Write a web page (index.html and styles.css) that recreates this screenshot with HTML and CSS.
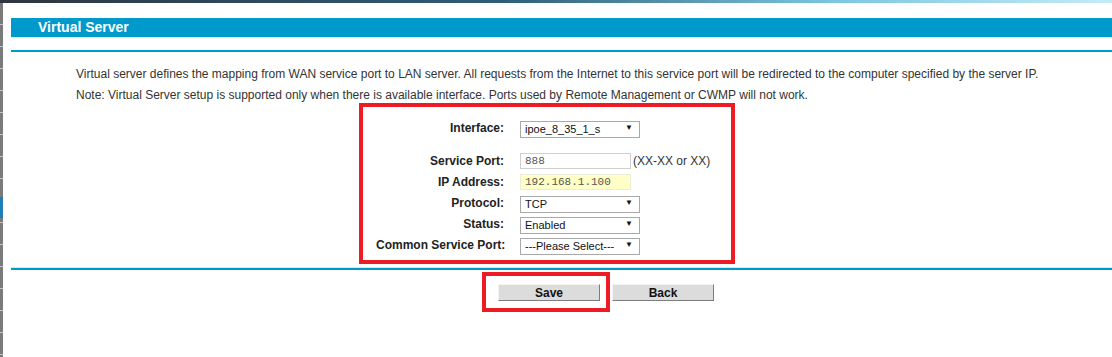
FILE: index.html
```html
<!DOCTYPE html>
<html lang="en">
<head>
    <meta charset="UTF-8">
    <title>Virtual Server</title>
    <link rel="stylesheet" href="styles.css">
</head>
<body>
    <div class="topline"></div>
    <div class="page">
        <div class="side"></div>
        <div class="main">
            <div class="title-bar">Virtual Server</div>
            <div class="rule"></div>

            <div class="intro">
                <p>Virtual server defines the mapping from WAN service port to LAN server. All requests from the Internet to this service port will be redirected to the computer specified by the server IP.</p>
                <p>Note: Virtual Server setup is supported only when there is available interface. Ports used by Remote Management or CWMP will not work.</p>
            </div>

            <div class="mark form-box">
                <div class="form">
                    <label>Interface:</label>
                    <span class="select"><select><option>ipoe_8_35_1_s</option></select></span>

                    <div class="spacer"></div>

                    <label>Service Port:</label>
                    <span><input type="text" class="text" value="888"><span class="hint">(XX-XX or XX)</span></span>

                    <label>IP Address:</label>
                    <span><input type="text" class="text ip" value="192.168.1.100"></span>

                    <label>Protocol:</label>
                    <span class="select"><select><option>TCP</option></select></span>

                    <label>Status:</label>
                    <span class="select"><select><option>Enabled</option></select></span>

                    <label>Common Service Port:</label>
                    <span class="select"><select><option>---Please Select---</option></select></span>
                </div>
            </div>

            <div class="rule rule-bottom"></div>

            <div class="buttons">
                <span class="mark save-mark"><button>Save</button></span>
                <button class="back">Back</button>
            </div>
        </div>
    </div>
</body>
</html>
```

FILE: styles.css
```css
body {
    margin: 0;
    font-family: 'Liberation Sans', Arial, sans-serif;
    background: #fff;
    color: #333;
}
.topline {
    height: 3px;
    background: linear-gradient(to right, #2f3540, #2e5d78 45%, #7cc6e0 75%, #c4ecf6);
}
.page {
    display: flex;
    height: 354px;
}
.side {
    width: 3px;
    flex: none;
    background:
        linear-gradient(#1f7fb2, #1f7fb2) 0 194px / 3px 21px no-repeat,
        repeating-linear-gradient(#7a7a7a 0 21px, #c4c4c4 21px 22px);
}
.main {
    flex: 1;
    padding-left: 8px;
}
.title-bar {
    margin-top: 15px;
    height: 19px;
    line-height: 19px;
    padding-left: 27px;
    background: #0099cc;
    border-bottom: 1px solid #dcebf2;
    color: #fff;
    font-size: 14px;
    font-weight: bold;
}
.rule {
    margin-top: 12px;
    height: 2px;
    background: #0099cc;
}
.intro {
    margin-top: 12px;
    padding-left: 65px;
    font-size: 12px;
    line-height: 21px;
}
.intro p {
    margin: 0;
    white-space: nowrap;
}
.mark {
    border: 4px solid #ed1c24;
}
.form-box {
    box-sizing: border-box;
    width: 376px;
    margin: -3px 0 0 348px;
    padding: 10px 0 5px 13px;
}
.form {
    display: grid;
    grid-template-columns: 128px auto;
    grid-template-rows: 21px 12px repeat(5, 21px);
    column-gap: 16px;
    align-items: center;
}
.form label {
    text-align: right;
    font-size: 12px;
    font-weight: bold;
    color: #222;
    white-space: nowrap;
}
.spacer {
    grid-column: 1 / 3;
}
.select {
    position: relative;
    display: inline-block;
    width: 120px;
    height: 17px;
}
.select select {
    appearance: none;
    -webkit-appearance: none;
    box-sizing: border-box;
    width: 120px;
    height: 17px;
    margin: 0;
    padding: 0 0 0 4px;
    border: 1px solid #a9a9a9;
    border-radius: 0;
    background: #fff;
    font-family: 'Liberation Sans', Arial, sans-serif;
    font-size: 11px;
    color: #111;
}
.select::after {
    content: "\25BC";
    position: absolute;
    right: 7px;
    top: 5px;
    font-size: 8px;
    line-height: 8px;
    color: #111;
    pointer-events: none;
}
.text {
    box-sizing: border-box;
    width: 111px;
    height: 16px;
    margin: 0;
    padding: 0 0 0 4px;
    border: 1px solid #cfcfcf;
    font-family: 'Liberation Mono', 'Courier New', monospace;
    font-size: 11px;
    color: #555;
    vertical-align: middle;
}
.text.ip {
    background: #ffffc6;
    border-color: #ececd8;
}
.hint {
    margin-left: 2px;
    font-size: 12px;
    color: #333;
    vertical-align: middle;
}
.rule-bottom {
    margin-top: 4px;
    box-shadow: 0 -1px 0 #cfe9f4;
}
.buttons {
    display: flex;
    align-items: flex-start;
    margin-top: 2px;
    padding-left: 471px;
}
.save-mark {
    padding: 8px 6px 7px 12px;
}
button {
    box-sizing: border-box;
    width: 102px;
    height: 17px;
    padding: 0;
    border: 1px solid;
    border-color: #f2f2f2 #7c7c7c #7c7c7c #f2f2f2;
    background: #dcdcdc;
    font-family: 'Liberation Sans', Arial, sans-serif;
    font-size: 12px;
    font-weight: bold;
    color: #111;
    display: block;
}
button.back {
    margin: 12px 0 0 2px;
}
```
